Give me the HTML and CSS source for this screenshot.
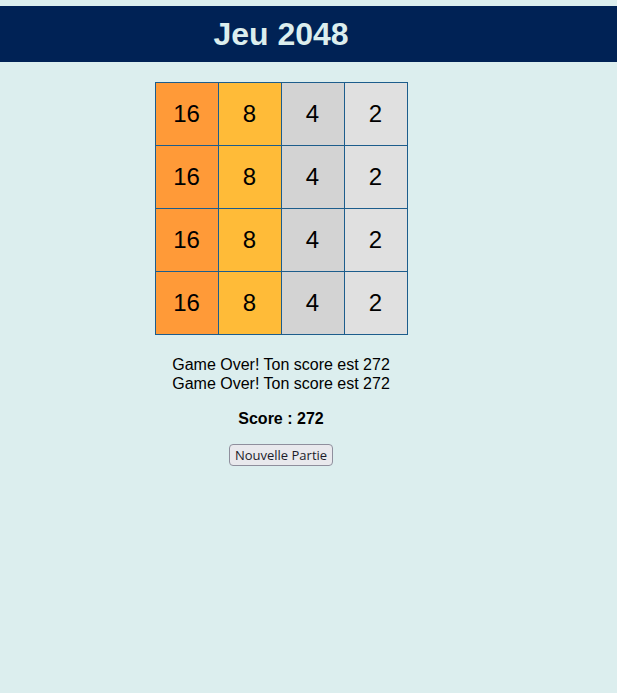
FILE: index.html
```html
<!DOCTYPE html>
<html lang="fr">
<head>
<meta charset="utf-8">
<title>Jeu 2048</title>
<link rel="stylesheet" href="styles.css">
</head>
<body>
<header class="header">
  <h1 class="title">Jeu 2048</h1>
</header>
<main class="main">
  <table class="board">
    <tr><td class="t16">16</td><td class="t8">8</td><td class="t4">4</td><td class="t2">2</td></tr>
    <tr><td class="t16">16</td><td class="t8">8</td><td class="t4">4</td><td class="t2">2</td></tr>
    <tr><td class="t16">16</td><td class="t8">8</td><td class="t4">4</td><td class="t2">2</td></tr>
    <tr><td class="t16">16</td><td class="t8">8</td><td class="t4">4</td><td class="t2">2</td></tr>
  </table>
  <div class="messages">
    <div>Game Over! Ton score est 272</div>
    <div>Game Over! Ton score est 272</div>
  </div>
  <p class="score">Score : 272</p>
  <button class="btn">Nouvelle Partie</button>
</main>
</body>
</html>
```

FILE: styles.css
```css
html, body {
  margin: 0;
  padding: 0;
  background: #dceeee;
  font-family: "Liberation Sans", Arial, sans-serif;
  color: #000;
}
.header {
  margin-top: 6px;
  background: #002255;
  height: 56px;
}
.title {
  width: 562px;
  margin: 0;
  height: 56px;
  line-height: 56px;
  text-align: center;
  font-size: 32px;
  font-weight: bold;
  color: #dceeee;
}
.main {
  width: 562px;
  display: flex;
  flex-direction: column;
  align-items: center;
  padding-top: 20px;
}
.board {
  border-collapse: collapse;
}
.board td {
  width: 62px;
  height: 62px;
  padding: 0;
  border: 1px solid #1d5d8c;
  text-align: center;
  vertical-align: middle;
  font-size: 24px;
}
.t16 { background: #ff9a38; }
.t8 { background: #ffbb38; }
.t4 { background: #d3d3d3; }
.t2 { background: #e0e0e0; }
.messages {
  margin-top: 20px;
  font-size: 16px;
  text-align: center;
  line-height: 19px;
}
.score {
  margin: 17px 0 16px;
  font-weight: bold;
  font-size: 16px;
}
.btn {
  font-family: "Open Sans", "Noto Sans", sans-serif;
  font-size: 13px;
  line-height: 18px;
  color: #1b1b2a;
  background: #e9e9ed;
  border: 1px solid #8f8f9d;
  border-radius: 4px;
  padding: 1px 5px;
  margin: 0;
}
```
